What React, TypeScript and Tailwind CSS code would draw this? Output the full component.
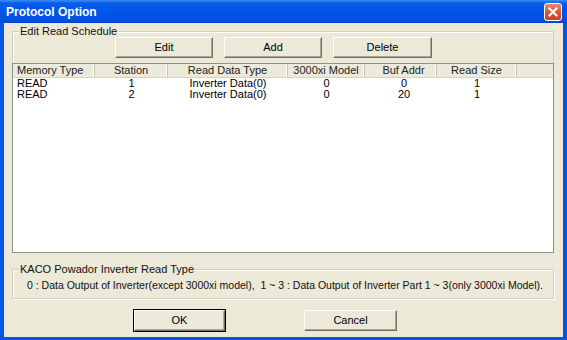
import React from 'react';

const FONT = { fontFamily: '"Liberation Sans", Arial, sans-serif' };

const COLUMNS = [
  { title: 'Memory Type', width: 'w-[82px]', align: 'text-left pl-[4px]' },
  { title: 'Station', width: 'w-[73px]', align: 'text-center' },
  { title: 'Read Data Type', width: 'w-[120px]', align: 'text-center' },
  { title: '3000xi Model', width: 'w-[77px]', align: 'text-center' },
  { title: 'Buf Addr', width: 'w-[72px]', align: 'text-center pl-[6px]' },
  { title: 'Read Size', width: 'w-[80px]', align: 'text-center' },
];

const ROWS = [
  ['READ', '1', 'Inverter Data(0)', '0', '0', '1'],
  ['READ', '2', 'Inverter Data(0)', '0', '20', '1'],
];

function XpButton({ label, isDefault, width }: { label: string; isDefault?: boolean; width: string }) {
  const face = (
    <div className="h-full w-full flex items-center justify-center bg-[#ECE9D8] border border-t-white border-l-white border-r-[#716F64] border-b-[#716F64] shadow-[inset_-1px_-1px_0_#ACA899] text-[11px] text-black">
      {label}
    </div>
  );
  if (isDefault) {
    return <div className={`${width} h-[23px] border border-black`}>{face}</div>;
  }
  return <div className={`${width} h-[21px]`}>{face}</div>;
}

function GroupLabel({ text }: { text: string }) {
  return (
    <span className="absolute left-[6px] top-[-7px] bg-[#ECE9D8] px-[1px] text-[11px] leading-[12px] text-[#111]">
      {text}
    </span>
  );
}

export default function App() {
  return (
    <div className="w-[567px] h-[340px] bg-[#0055E5]" style={FONT}>
      <div className="h-[23px] flex items-center justify-between pl-[6px] pr-[5px] bg-[linear-gradient(to_bottom,#3D8DF5_0%,#0A5CEA_14%,#0056E6_50%,#0052E2_85%,#0045CC_100%)]">
        <span className="text-white font-bold text-[12px]">Protocol Option</span>
        <div className="w-[18px] h-[18px] rounded-[3px] border border-white bg-[linear-gradient(to_bottom,#E9876A,#D5522F_60%,#C74425)] flex items-center justify-center">
          <svg width="10" height="10" viewBox="0 0 10 10">
            <path d="M1.5 1.5 L8.5 8.5 M8.5 1.5 L1.5 8.5" stroke="white" strokeWidth="2" strokeLinecap="square" />
          </svg>
        </div>
      </div>

      <div className="mx-[4px] h-[314px] bg-[#ECE9D8] pl-[8px] pr-[9px] pt-[8px] flex flex-col">
        <div className="relative border border-b-0 border-[#D0D0BF] shadow-[inset_1px_1px_0_#fff]">
          <GroupLabel text="Edit Read Schedule" />
          <div className="flex gap-[11px] pl-[102px] pt-[5px]">
            <XpButton label="Edit" width="w-[98px]" />
            <XpButton label="Add" width="w-[98px]" />
            <XpButton label="Delete" width="w-[99px]" />
          </div>
          <div className="-mx-px mt-[5px] h-[190px] border border-[#8E8F8F] bg-white text-[11px] text-black">
            <div className="flex h-[14px] bg-[#EBEADB] border-b border-[#D6D2C2] leading-[13px]">
              {COLUMNS.map(c => (
                <div key={c.title} className={`${c.width} ${c.align} border-r border-[#C7C5B2] shadow-[inset_-1px_0_0_#fff] text-[#222]`}>
                  {c.title}
                </div>
              ))}
              <div className="flex-1" />
            </div>
            {ROWS.map((r, i) => (
              <div key={i} className="flex h-[11px] leading-[11px]">
                {r.map((v, j) => (
                  <div key={j} className={`${COLUMNS[j].width} ${COLUMNS[j].align}`}>
                    {v}
                  </div>
                ))}
              </div>
            ))}
          </div>
        </div>

        <div className="relative mt-[16px] h-[30px] border border-[#D0D0BF] shadow-[inset_1px_1px_0_#fff,1px_1px_0_#fff]">
          <GroupLabel text="KACO Powador Inverter Read Type" />
          <div className="pl-[14px] pt-[9px] text-[10.5px] leading-[12px] text-[#111] whitespace-nowrap">
            0 : Data Output of Inverter(except 3000xi model),&nbsp;&nbsp;1 ~ 3 : Data Output of Inverter Part 1 ~ 3(only 3000xi Model).
          </div>
        </div>

        <div className="mt-[10px] flex pl-[121px] gap-[78px]">
          <XpButton label="OK" isDefault width="w-[93px]" />
          <div className="pt-px">
            <XpButton label="Cancel" width="w-[93px]" />
          </div>
        </div>
      </div>
    </div>
  );
}
